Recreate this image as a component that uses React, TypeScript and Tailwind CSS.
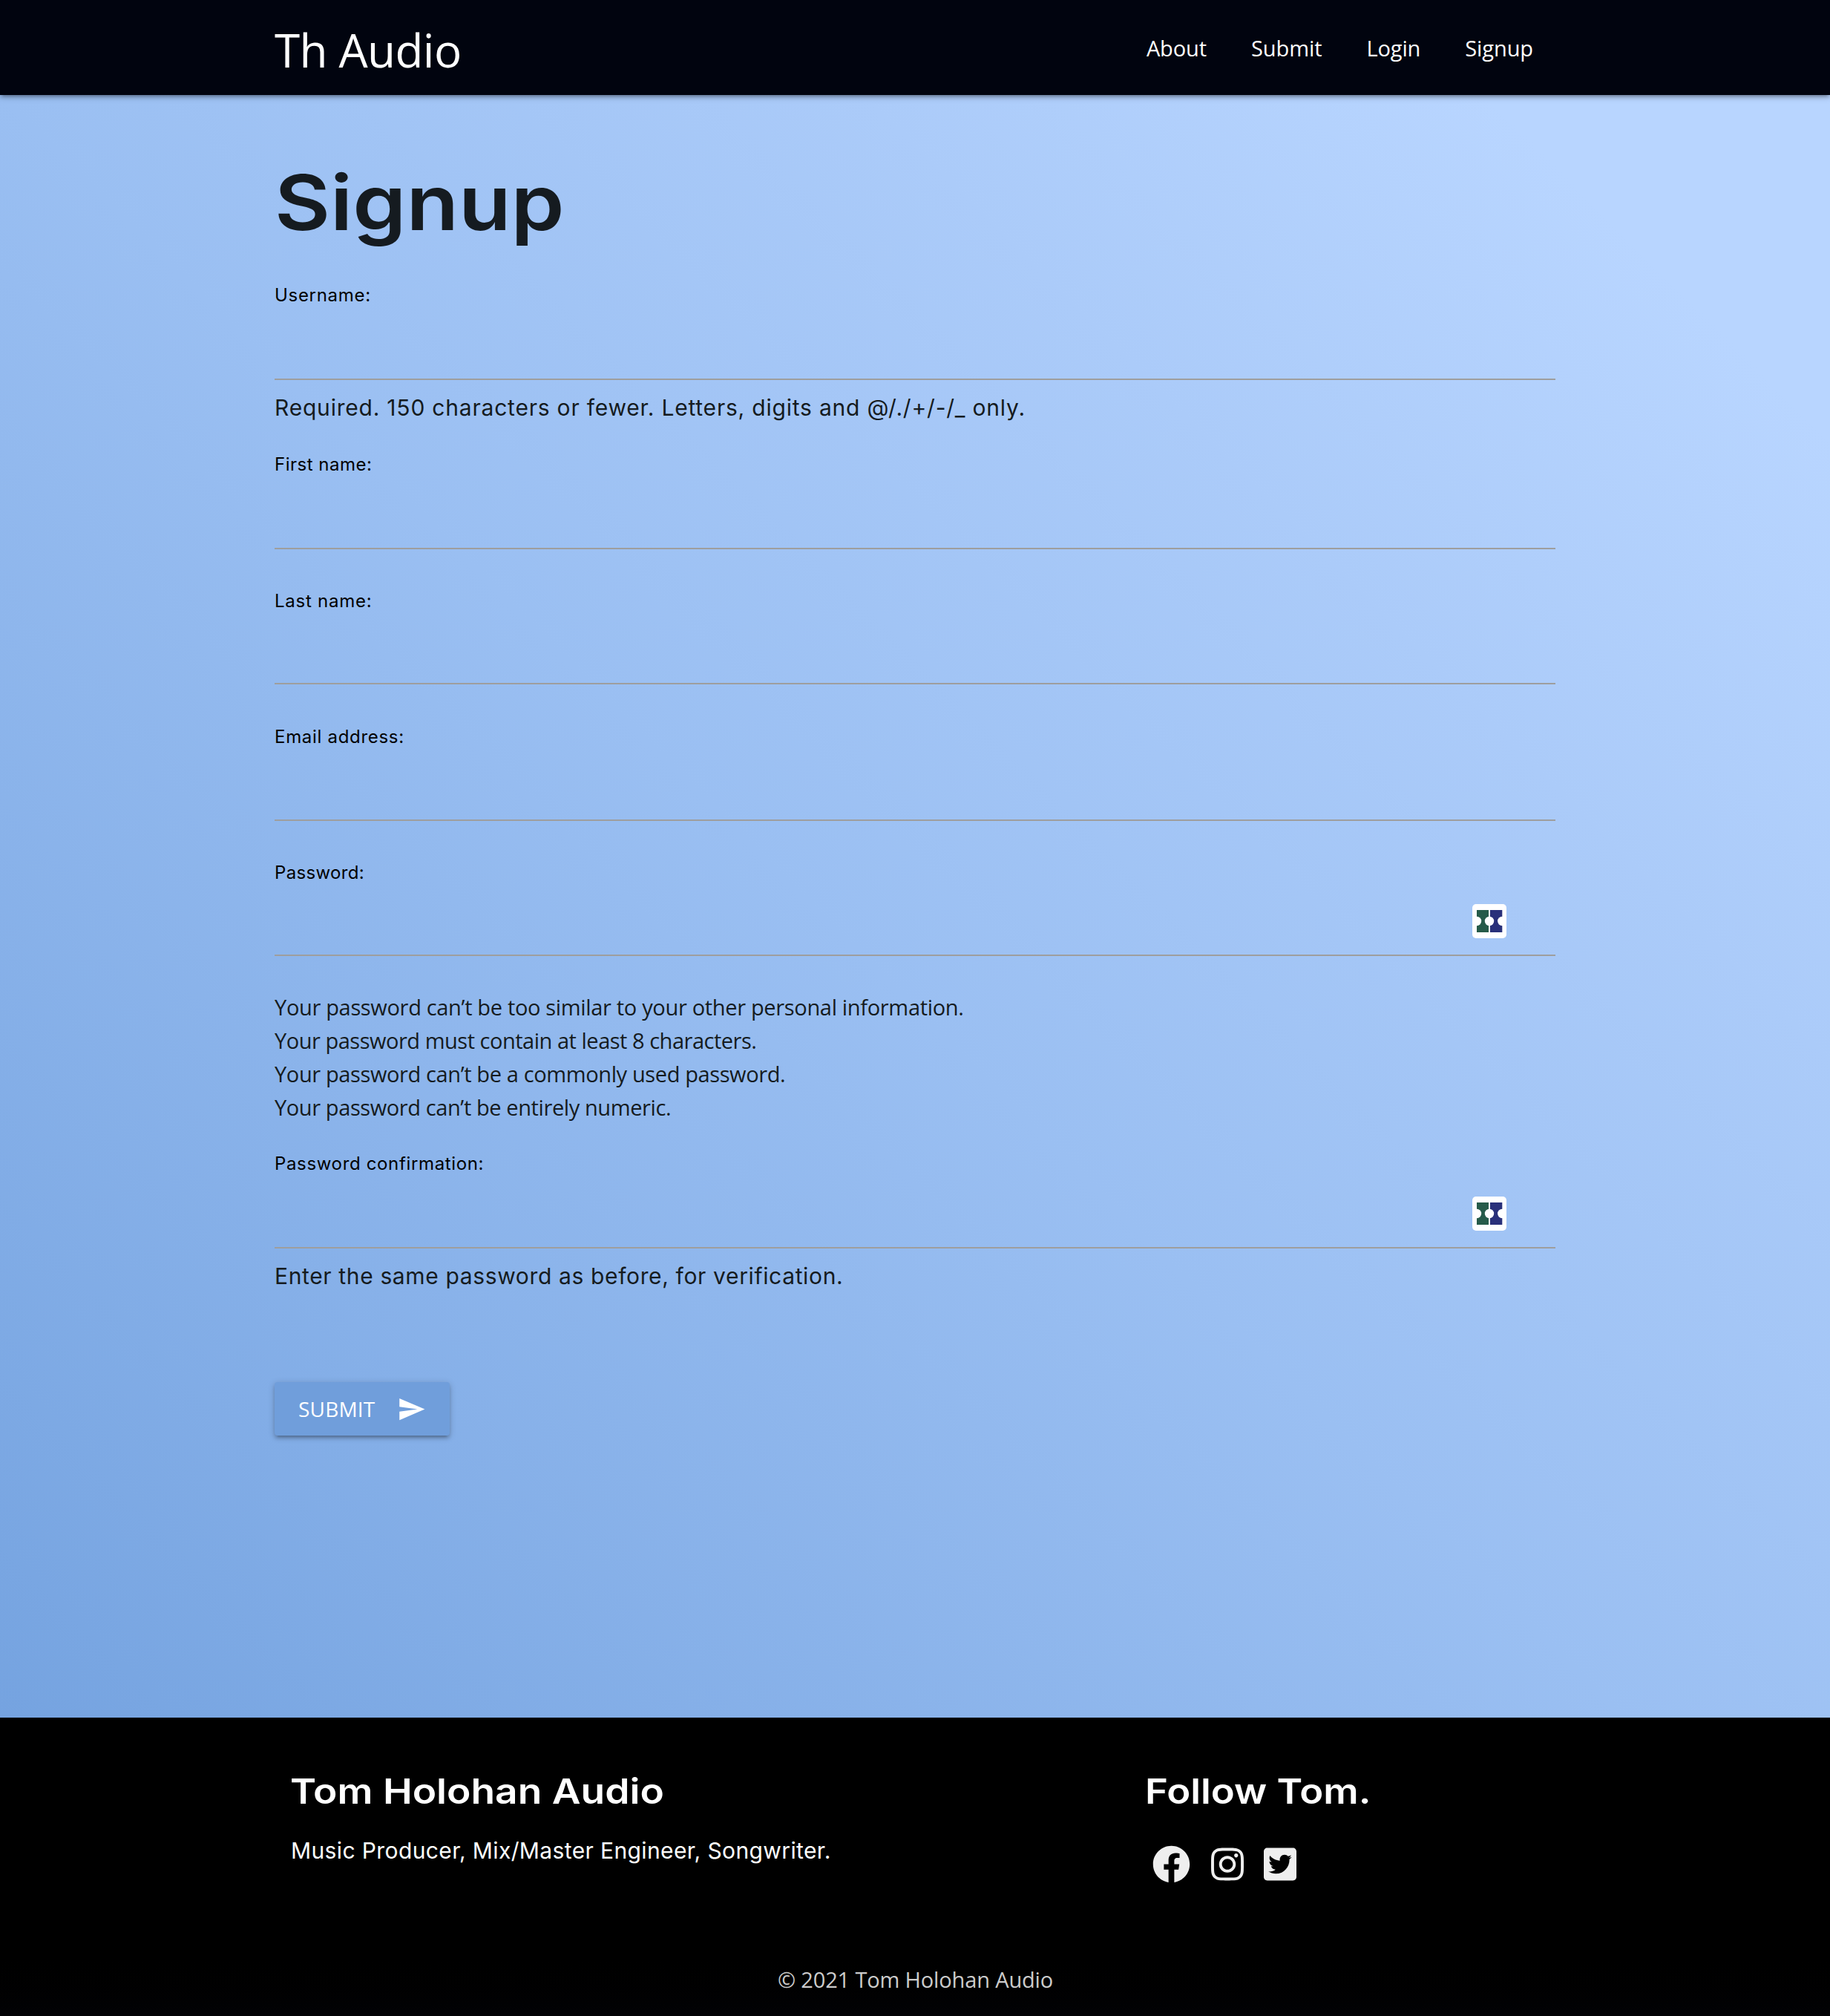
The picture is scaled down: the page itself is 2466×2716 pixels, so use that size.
import type { ReactNode } from 'react'
import { FaFacebook, FaInstagram, FaTwitterSquare } from 'react-icons/fa'
import { MdSend } from 'react-icons/md'

const navLinks = ['About', 'Submit', 'Login', 'Signup']

const passwordRules = [
  { text: 'Your password can’t be too similar to your other personal information.', tracking: 'tracking-[-0.33px]' },
  { text: 'Your password must contain at least 8 characters.', tracking: 'tracking-[-0.48px]' },
  { text: 'Your password can’t be a commonly used password.', tracking: 'tracking-[-0.38px]' },
  { text: 'Your password can’t be entirely numeric.', tracking: 'tracking-[-0.4px]' },
]

function PasswordManagerIcon() {
  return (
    <svg viewBox="0 0 46 46" className="mr-[66px] h-[46px] w-[46px]">
      <rect width="46" height="46" rx="5" fill="#fff" />
      <rect x="6" y="8" width="16" height="30" fill="#265b4a" />
      <rect x="24" y="8" width="16.3" height="30" fill="#29307a" />
      <circle cx="6" cy="23" r="6.2" fill="#fff" />
      <circle cx="23" cy="23" r="6.2" fill="#fff" />
      <circle cx="40.3" cy="23" r="6.2" fill="#fff" />
    </svg>
  )
}

function Field({ label, labelClass, className, icon }: { label: string; labelClass: string; className: string; icon?: ReactNode }) {
  return (
    <div className={className}>
      <label className={`block h-[36px] text-2xl whitespace-nowrap text-black ${labelClass}`}>{label}</label>
      <div className="flex h-[96px] items-start justify-end border-b-2 border-[#9e9e9e] pt-[26px]">{icon}</div>
    </div>
  )
}

export default function App() {
  return (
    <div className="min-h-[2716px] w-full bg-black font-['Inter',sans-serif]">
      <nav className="relative z-10 h-[128px] bg-[#01040f] shadow-[0_4px_4px_0_rgba(0,0,0,0.14),0_6px_2px_-4px_rgba(0,0,0,0.12),0_2px_10px_0_rgba(0,0,0,0.2)]">
        <div className="mx-auto flex w-[1726px] justify-between font-['Open_Sans',sans-serif] text-white">
          <a className="pt-[3px] text-[62px] leading-[128px] tracking-[-0.6px]">Th Audio</a>
          <ul className="flex">
            {navLinks.map((link) => (
              <li key={link} className="px-[30px] pt-px text-[29px] leading-[128px] tracking-[-0.1px]">
                {link}
              </li>
            ))}
          </ul>
        </div>
      </nav>

      <main className="h-[2186px] bg-[linear-gradient(45deg,#75a3e0_0%,#9abff2_47%,#abcbf9_72%,#b8d5ff_90%)]">
        <div className="mx-auto flex w-[1726px] flex-col items-stretch pt-[90px] text-[#151b20]">
          <h1 className="w-fit origin-left scale-x-[1.12] text-[103px] leading-[110px] font-semibold">Signup</h1>

          <Field label="Username:" labelClass="leading-[36px] tracking-[0.7px]" className="mt-[52px]" />
          <p className="mt-[15px] text-[30px] leading-[45px] tracking-[0.79px]">
            Required. 150 characters or fewer. Letters, digits and @/./+/-/_ only.
          </p>
          <Field label="First name:" labelClass="leading-[36px] tracking-[0.5px]" className="mt-[36px]" />
          <Field label="Last name:" labelClass="leading-[39px] tracking-[0.75px]" className="mt-[50px]" />
          <Field label="Email address:" labelClass="leading-[37px] tracking-[0.7px]" className="mt-[52px]" />
          <Field label="Password:" labelClass="leading-[39px] tracking-[0.35px]" className="mt-[50px]" icon={<PasswordManagerIcon />} />

          <ul className="mt-[46px] font-['Open_Sans',sans-serif] text-[29px] leading-[45px]">
            {passwordRules.map((rule) => (
              <li key={rule.text} className={rule.tracking}>
                {rule.text}
              </li>
            ))}
          </ul>

          <Field
            label="Password confirmation:"
            labelClass="leading-[36px] tracking-[0.65px]"
            className="mt-[36px]"
            icon={<PasswordManagerIcon />}
          />
          <p className="mt-[15px] text-[30px] leading-[45px] tracking-[0.64px]">
            Enter the same password as before, for verification.
          </p>

          <button className="mt-[120px] flex h-[72px] w-[236px] items-center justify-between rounded-[4px] bg-[#709edb] px-8 font-['Open_Sans',sans-serif] text-[28px] leading-[72px] tracking-[0.2px] text-white shadow-[0_4px_4px_0_rgba(0,0,0,0.14),0_6px_2px_-4px_rgba(0,0,0,0.12),0_2px_10px_0_rgba(0,0,0,0.2)]">
            <span className="-mt-px">SUBMIT</span>
            <MdSend className="h-[39px] w-[39px]" />
          </button>
        </div>
      </main>

      <footer className="h-[402px] bg-linear-to-b from-black from-75% to-[#020205] text-white">
        <div className="mx-auto flex h-[330px] w-[1726px] pt-[73px]">
          <div className="w-[1173px] pl-[21px]">
            <h2 className="w-fit origin-left scale-x-[1.134] text-[47px] leading-[52px] font-semibold">Tom Holohan Audio</h2>
            <p className="mt-[32px] ml-px text-[30px] leading-[45px] tracking-[0.38px]">
              Music Producer, Mix/Master Engineer, Songwriter.
            </p>
          </div>
          <div>
            <h2 className="w-fit origin-left scale-x-[1.12] text-[47px] leading-[52px] font-semibold">Follow Tom.</h2>
            <div className="mt-[47px] ml-[10px] flex gap-[27.5px] text-[#eee]">
              <FaFacebook className="h-[51px] w-[51px]" />
              <FaInstagram className="h-[51px] w-[44px]" />
              <FaTwitterSquare className="h-[51px] w-[44px]" />
            </div>
          </div>
        </div>
        <p className="pl-px text-center font-['Open_Sans',sans-serif] text-[29px] leading-[45px] tracking-[-0.15px] text-[#ccc]">
          © 2021 Tom Holohan Audio
        </p>
      </footer>
    </div>
  )
}
